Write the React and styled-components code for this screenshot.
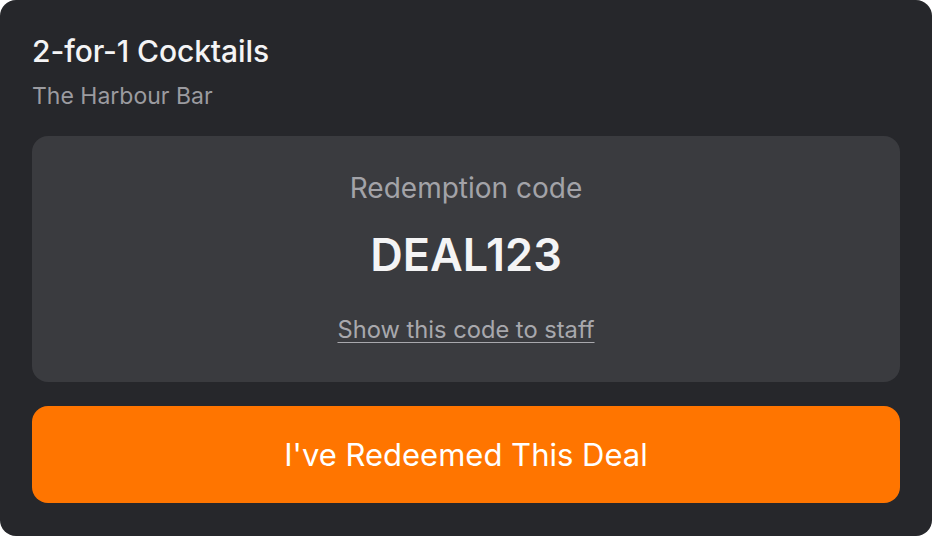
import styled, { createGlobalStyle } from 'styled-components'

const GlobalStyle = createGlobalStyle`
  html, body {
    margin: 0;
    background: #ffffff;
  }
  body {
    font-family: Inter, "Noto Sans", sans-serif;
  }
`

const App = () => {
  return (
    <>
      <GlobalStyle />
      <Card>
        <Title>2-for-1 Cocktails</Title>
        <Venue>The Harbour Bar</Venue>
        <CodeBox>
          <CodeLabel>Redemption code</CodeLabel>
          <Code>DEAL123</Code>
          <Hint>Show this code to staff</Hint>
        </CodeBox>
        <RedeemButton>I've Redeemed This Deal</RedeemButton>
      </Card>
    </>
  )
}

export default App

const Card = styled.div`
  width: 932px;
  height: 536px;
  box-sizing: border-box;
  background: #26272b;
  border-radius: 16px;
  padding: 32px 32px 33px;
  display: flex;
  flex-direction: column;
`

const Title = styled.div`
  font-size: 30px;
  line-height: 38px;
  font-weight: 500;
  color: #f4f4f5;
  letter-spacing: -0.1px;
`

const Venue = styled.div`
  font-size: 23px;
  line-height: 28px;
  margin-top: 12px;
  color: #9b9ba0;
`

const CodeBox = styled.div`
  margin-top: 26px;
  height: 246px;
  box-sizing: border-box;
  background: #3a3b3f;
  border-radius: 16px;
  padding-top: 37px;
  display: flex;
  flex-direction: column;
  align-items: center;
`

const CodeLabel = styled.div`
  font-size: 28px;
  line-height: 30px;
  color: #a3a3a8;
`

const Code = styled.div`
  margin-top: 27px;
  font-size: 45px;
  line-height: 50px;
  font-weight: 600;
  color: #f4f4f5;
`

const Hint = styled.a`
  margin-top: 36px;
  font-size: 23.7px;
  line-height: 28px;
  color: #a8a8ad;
  text-decoration: underline;
  text-underline-offset: 4px;
  text-decoration-thickness: 1px;
`

const RedeemButton = styled.button`
  margin-top: 24px;
  height: 97px;
  border: none;
  border-radius: 16px;
  background: #ff7500;
  color: #ffffff;
  font-family: inherit;
  font-size: 31px;
  font-weight: 400;
  cursor: pointer;
`
